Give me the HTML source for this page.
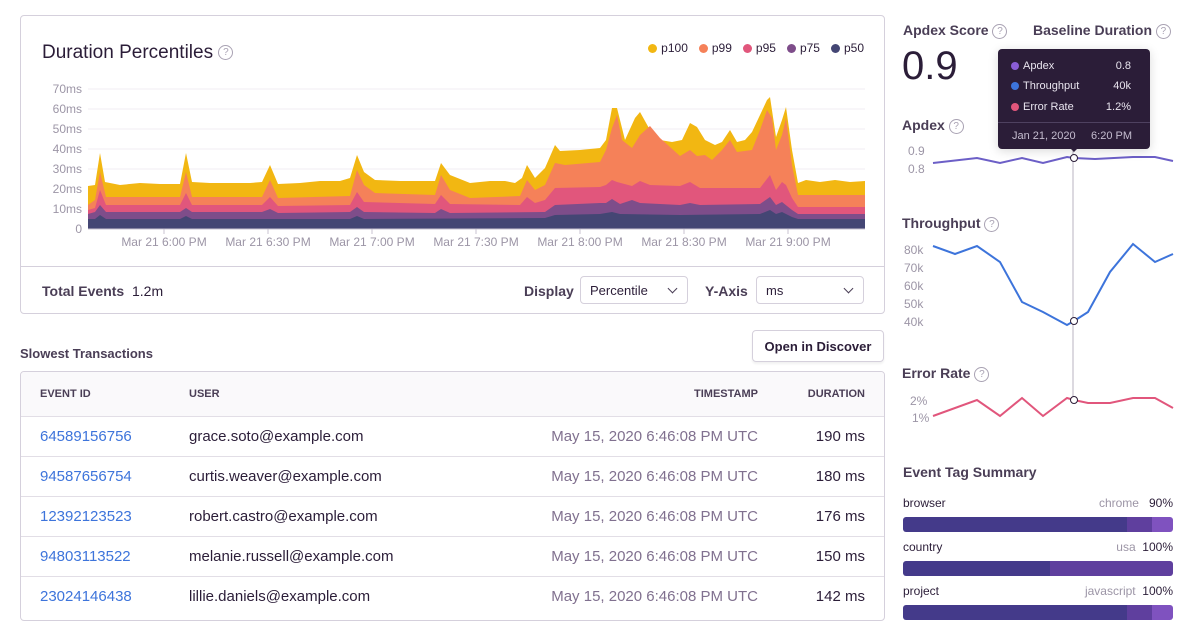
<!DOCTYPE html><html><head><meta charset="utf-8"><style>
*{box-sizing:border-box;margin:0;padding:0}
body{width:1195px;height:642px;background:#fff;font-family:"Liberation Sans",sans-serif;color:#2b1d38;position:relative;overflow:hidden}
.a{position:absolute;white-space:nowrap}
.q{display:inline-block;width:15px;height:15px;border:1.3px solid #a9a2b3;border-radius:50%;font-size:10px;color:#a9a2b3;text-align:center;line-height:13px;vertical-align:middle;font-weight:normal}
.card{position:absolute;border:1px solid #d5d0dc;border-radius:4px}
.sel{position:absolute;border:1px solid #d5d0dc;border-radius:4px;height:28px;font-size:13px;padding:6px 9px;color:#2b1d38}
.sel:after{content:"";position:absolute;right:11px;top:8px;width:6px;height:6px;border-right:1.3px solid #4a3e56;border-bottom:1.3px solid #4a3e56;transform:rotate(45deg)}
.row{position:absolute;left:0;width:863px;height:40px;border-top:1px solid #e2dee6;font-size:15px}
.row span{position:absolute;top:11px}
.lbl{font-size:14px;font-weight:bold;color:#4a3e56}
.bar{position:absolute;left:903px;width:270px;height:15px;border-radius:3px;overflow:hidden;display:flex}
.dot{display:inline-block;width:9px;height:9px;border-radius:50%;margin-right:4px;vertical-align:-1px}
.lg{margin-left:11px}
</style></head><body>
<div class="card" style="left:20px;top:15px;width:865px;height:299px"></div>
<div class="a" style="left:20px;top:266px;width:865px;border-top:1px solid #d5d0dc"></div>
<div class="a" style="left:42px;top:42px;font-size:19px;color:#2b1d38">Duration Percentiles <span class="q">?</span></div>
<div class="a" style="right:331px;top:41px;font-size:12px;color:#2b1d38">
<span><i class="dot" style="background:#f2b712"></i>p100</span><span class="lg"><i class="dot" style="background:#f58159"></i>p99</span><span class="lg"><i class="dot" style="background:#e1567c"></i>p95</span><span class="lg"><i class="dot" style="background:#7e4d8a"></i>p75</span><span class="lg"><i class="dot" style="background:#444674"></i>p50</span></div>
<svg class="a" style="left:0;top:0" width="890" height="260" font-family="Liberation Sans" font-size="12" fill="#9c95a6">
<g stroke="#f0eef3"><line x1="88" x2="865" y1="89" y2="89"/><line x1="88" x2="865" y1="109" y2="109"/><line x1="88" x2="865" y1="129" y2="129"/><line x1="88" x2="865" y1="149" y2="149"/><line x1="88" x2="865" y1="169" y2="169"/><line x1="88" x2="865" y1="189" y2="189"/><line x1="88" x2="865" y1="209" y2="209"/></g>
<g text-anchor="end"><text x="82" y="93">70ms</text><text x="82" y="113">60ms</text><text x="82" y="133">50ms</text><text x="82" y="153">40ms</text><text x="82" y="173">30ms</text><text x="82" y="193">20ms</text><text x="82" y="213">10ms</text><text x="82" y="233">0</text></g>
<polygon fill="#f2b712" points="88,186 95,185 100,153 105,182 120,185 140,183 160,184 180,184 186,153 192,182 210,183 230,183 250,183 262,182 270,165 278,184 300,183 320,181 340,181 350,178 357,155 364,172 375,180 400,181 420,181 435,181 441,163 450,175 470,183 490,181 505,181 515,183 522,178 527,165 535,178 545,168 555,145 560,151 580,150 600,148 606,140 612,108 617,108 625,140 635,118 640,112 650,130 660,140 672,142 682,140 690,123 697,127 705,140 715,145 722,142 730,130 737,142 745,140 752,132 760,115 767,100 770,97 776,137 782,120 786,107 792,150 798,183 806,180 820,182 835,180 850,182 865,181 865,229 88,229"/>
<polygon fill="#f58159" points="88,205 95,200 100,172 106,197 130,197 180,197 186,172 192,197 262,197 270,180 278,198 350,196 357,170 364,185 375,193 435,195 441,175 450,190 470,198 520,196 527,180 535,190 545,185 555,163 565,165 600,162 606,150 612,128 617,115 622,140 632,148 640,135 650,126 660,138 680,156 690,150 697,156 705,155 712,160 722,150 730,140 737,152 752,150 760,130 767,110 772,118 776,150 782,135 786,118 792,165 798,195 865,195 865,229 88,229"/>
<polygon fill="#e1567c" points="88,210 95,208 100,190 106,205 180,205 186,193 192,205 262,205 270,197 278,206 350,205 357,192 364,202 435,204 441,195 450,204 520,205 527,197 535,203 545,200 555,188 600,187 606,185 612,180 617,182 632,186 640,181 650,185 680,186 690,182 700,188 760,188 770,175 776,190 782,182 786,185 792,198 798,207 865,207 865,229 88,229"/>
<polygon fill="#7e4d8a" points="88,214 95,212 100,205 106,212 180,212 186,208 192,212 262,212 270,209 278,213 350,212 357,207 364,212 435,213 441,209 450,213 545,212 555,205 600,203 606,203 612,199 620,204 632,200 640,203 680,205 690,203 700,205 760,204 770,197 776,205 782,202 792,210 798,214 865,214 865,229 88,229"/>
<polygon fill="#444674" points="88,219 95,219 100,215 106,219 180,219 186,216 192,219 350,219 357,216 364,219 545,218 555,215 600,214 612,212 620,214 680,215 760,214 770,210 776,214 782,212 792,217 798,219 865,219 865,229 88,229"/>
<line x1="88" x2="865" y1="229" y2="229" stroke="#c9c3d1"/>
<g stroke="#c9c3d1"><line x1="164" x2="164" y1="229" y2="234"/><line x1="268" x2="268" y1="229" y2="234"/><line x1="372" x2="372" y1="229" y2="234"/><line x1="476" x2="476" y1="229" y2="234"/><line x1="580" x2="580" y1="229" y2="234"/><line x1="684" x2="684" y1="229" y2="234"/><line x1="788" x2="788" y1="229" y2="234"/></g>
<g text-anchor="middle"><text x="164" y="246">Mar 21 6:00 PM</text><text x="268" y="246">Mar 21 6:30 PM</text><text x="372" y="246">Mar 21 7:00 PM</text><text x="476" y="246">Mar 21 7:30 PM</text><text x="580" y="246">Mar 21 8:00 PM</text><text x="684" y="246">Mar 21 8:30 PM</text><text x="788" y="246">Mar 21 9:00 PM</text></g>
</svg>
<div class="a" style="left:42px;top:283px;font-size:14px"><b style="color:#4a3e56">Total Events</b>&nbsp; 1.2m</div>
<div class="a lbl" style="left:524px;top:283px">Display</div>
<div class="sel" style="left:580px;top:276px;width:108px">Percentile</div>
<div class="a lbl" style="left:705px;top:283px">Y-Axis</div>
<div class="sel" style="left:756px;top:276px;width:108px">ms</div>

<div class="a lbl" style="left:20px;top:346px;font-size:13px">Slowest Transactions</div>
<div class="a" style="left:752px;top:330px;width:132px;height:32px;border:1px solid #d5d0dc;border-radius:4px;font-size:13px;font-weight:bold;text-align:center;line-height:31px;box-shadow:0 2px 2px rgba(0,0,0,.06);color:#2b1d38">Open in Discover</div>
<div class="card" style="left:20px;top:371px;width:865px;height:250px;overflow:hidden">
<div class="a" style="left:0;top:0;width:863px;height:45px;background:#faf9fb;font-size:11px;font-weight:bold;color:#4a3e56">
<span class="a" style="left:19px;top:16px">EVENT ID</span><span class="a" style="left:168px;top:16px">USER</span><span class="a" style="right:126px;top:16px">TIMESTAMP</span><span class="a" style="right:19px;top:16px">DURATION</span></div>
<div class="row" style="top:44px"><span style="left:19px;color:#3d74db">64589156756</span><span style="left:168px">grace.soto@example.com</span><span style="right:126px;color:#80708f">May 15, 2020 6:46:08 PM UTC</span><span style="right:19px">190 ms</span></div>
<div class="row" style="top:84px"><span style="left:19px;color:#3d74db">94587656754</span><span style="left:168px">curtis.weaver@example.com</span><span style="right:126px;color:#80708f">May 15, 2020 6:46:08 PM UTC</span><span style="right:19px">180 ms</span></div>
<div class="row" style="top:124px"><span style="left:19px;color:#3d74db">12392123523</span><span style="left:168px">robert.castro@example.com</span><span style="right:126px;color:#80708f">May 15, 2020 6:46:08 PM UTC</span><span style="right:19px">176 ms</span></div>
<div class="row" style="top:164px"><span style="left:19px;color:#3d74db">94803113522</span><span style="left:168px">melanie.russell@example.com</span><span style="right:126px;color:#80708f">May 15, 2020 6:46:08 PM UTC</span><span style="right:19px">150 ms</span></div>
<div class="row" style="top:204px"><span style="left:19px;color:#3d74db">23024146438</span><span style="left:168px">lillie.daniels@example.com</span><span style="right:126px;color:#80708f">May 15, 2020 6:46:08 PM UTC</span><span style="right:19px">142 ms</span></div>
</div>

<div class="a lbl" style="left:903px;top:22px">Apdex Score <span class="q">?</span></div>
<div class="a lbl" style="left:1033px;top:22px">Baseline Duration <span class="q">?</span></div>
<div class="a" style="left:902px;top:44px;font-size:40px;color:#2b1d38">0.9</div>
<div class="a lbl" style="left:902px;top:117px">Apdex <span class="q">?</span></div>
<div class="a lbl" style="left:902px;top:215px">Throughput <span class="q">?</span></div>
<div class="a lbl" style="left:902px;top:365px">Error Rate <span class="q">?</span></div>
<svg class="a" style="left:895px;top:130px" width="300" height="300" font-family="Liberation Sans" font-size="12" fill="#9c95a6">
<g transform="translate(-895,-130)">
<text x="908" y="155">0.9</text><text x="908" y="173">0.8</text>
<text x="904" y="254">80k</text><text x="904" y="272">70k</text><text x="904" y="290">60k</text><text x="904" y="308">50k</text><text x="904" y="326">40k</text>
<text x="910" y="405">2%</text><text x="912" y="422">1%</text>
<line x1="1073" x2="1073" y1="150" y2="400" stroke="#b9b3c2"/>
<polyline fill="none" stroke="#6c5fc7" stroke-width="2" points="933,163 977,158 1000,163 1022,158 1043,163 1067,157 1074,158 1095,159 1133,157 1155,157 1173,161"/>
<polyline fill="none" stroke="#3d74db" stroke-width="2" points="933,246 955,254 977,246 1000,262 1022,302 1043,312 1067,325 1074,321 1088,312 1110,272 1133,244 1155,262 1173,254"/>
<polyline fill="none" stroke="#e1567c" stroke-width="2" points="933,416 977,400 1000,416 1022,398 1043,416 1067,398 1074,400 1088,403 1110,403 1133,398 1155,398 1173,408"/>
<g fill="#fff" stroke="#2b1d38" stroke-width="1"><circle cx="1074" cy="158" r="3.5"/><circle cx="1074" cy="321" r="3.5"/><circle cx="1074" cy="400" r="3.5"/></g>
</g></svg>
<div class="a" style="left:998px;top:49px;width:152px;height:100px;background:#2b1d38;border-radius:4px;box-shadow:0 2px 10px rgba(0,0,0,.15);font-size:11px;color:#e8e4ee">
<div class="a" style="left:13px;top:11px"><i class="dot" style="background:#8a5dd6;width:8px;height:8px"></i>Apdex</div><div class="a" style="right:19px;top:11px">0.8</div>
<div class="a" style="left:13px;top:31px"><i class="dot" style="background:#3d74db;width:8px;height:8px"></i>Throughput</div><div class="a" style="right:19px;top:31px">40k</div>
<div class="a" style="left:13px;top:52px"><i class="dot" style="background:#e1567c;width:8px;height:8px"></i>Error Rate</div><div class="a" style="right:19px;top:52px">1.2%</div>
<div class="a" style="left:0;top:73px;width:152px;border-top:1px solid #4e4160"></div>
<div class="a" style="left:14px;top:81px;color:#c4bccf">Jan 21, 2020</div><div class="a" style="right:18px;top:81px;color:#c4bccf">6:20 PM</div>
<div class="a" style="left:71px;top:98px;width:0;height:0;border:5px solid transparent;border-top-color:#2b1d38"></div>
</div>

<div class="a lbl" style="left:903px;top:464px">Event Tag Summary</div>
<div class="a" style="left:903px;top:496px;font-size:12px">browser</div><div class="a" style="right:22px;top:496px;font-size:12px"><span style="color:#9c95a6">chrome</span>&nbsp;&nbsp;&nbsp;90%</div>
<div class="bar" style="top:517px"><div style="width:224px;background:#443a8a"></div><div style="width:25px;background:#5f3f9e"></div><div style="flex:1;background:#7f52bf"></div></div>
<div class="a" style="left:903px;top:540px;font-size:12px">country</div><div class="a" style="right:22px;top:540px;font-size:12px"><span style="color:#9c95a6">usa</span>&nbsp;&nbsp;100%</div>
<div class="bar" style="top:561px"><div style="width:147px;background:#443a8a"></div><div style="flex:1;background:#5f3f9e"></div></div>
<div class="a" style="left:903px;top:584px;font-size:12px">project</div><div class="a" style="right:22px;top:584px;font-size:12px"><span style="color:#9c95a6">javascript</span>&nbsp;&nbsp;100%</div>
<div class="bar" style="top:605px"><div style="width:224px;background:#443a8a"></div><div style="width:25px;background:#5f3f9e"></div><div style="flex:1;background:#7f52bf"></div></div>
</body></html>
